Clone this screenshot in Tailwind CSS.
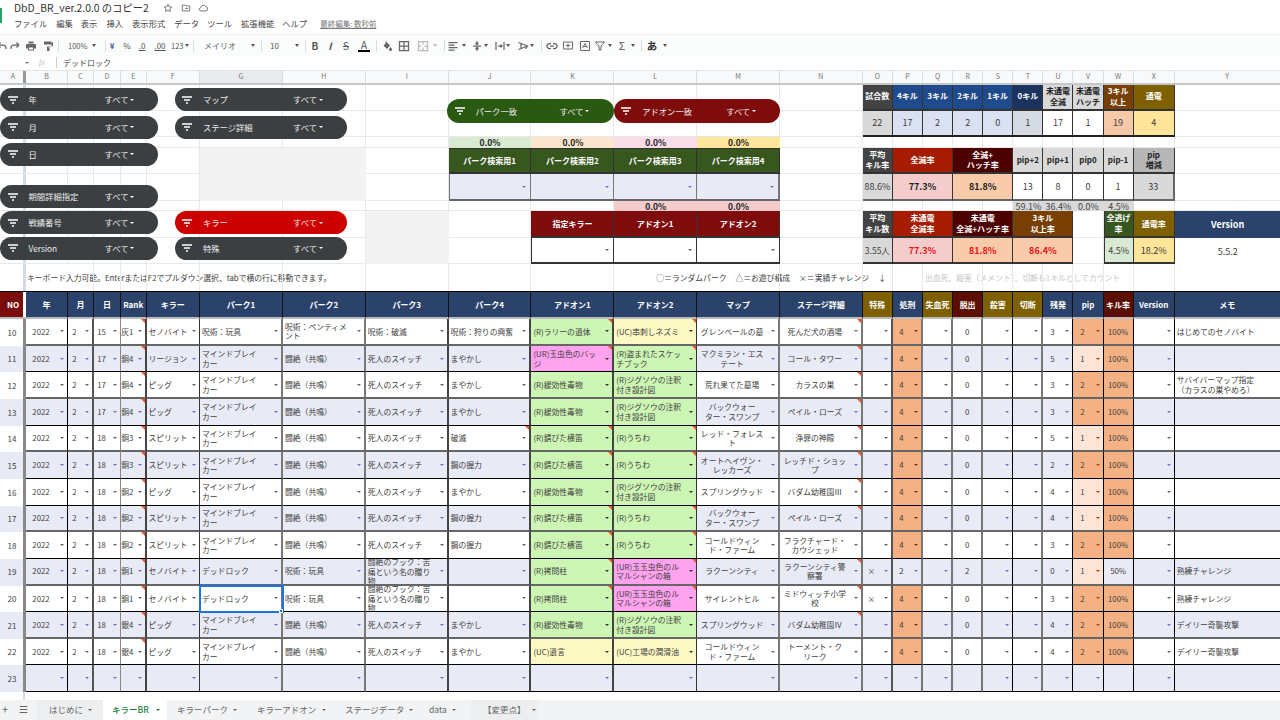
<!DOCTYPE html>
<html lang="ja">
<head>
  <meta charset="UTF-8" />
  <title>DbD_BR_ver.2.0.0 のコピー2</title>
  <script src="https://cdn.jsdelivr.net/npm/@tailwindcss/browser@4"></script>
</head>
<body class="w-[1280px] h-[720px] overflow-hidden bg-white text-[7.8px] text-[#404040] font-['Noto_Sans_CJK_JP',sans-serif]">

  <!-- title + menu -->
  <div class="relative h-[34px] pl-[14px]">
    <div class="absolute left-0 top-[8px] w-[2px] h-[15px] bg-[#23a566]"></div>
    <div class="flex items-center h-[16px]">
      <span class="w-[149px] text-[10.3px] leading-[16px] text-[#333] whitespace-nowrap">DbD_BR_ver.2.0.0 のコピー2</span>
      <svg class="w-[10px] h-[10px]" viewBox="0 0 24 24" fill="none" stroke="#5f6368" stroke-width="2"><path d="M12 3l2.8 6 6.4.7-4.800 4.400 1.400 6.400L12 17.200 6.200 20.500l1.400-6.400L2.800 9.700 9.200 9z"/></svg>
      <svg class="ml-[8px] w-[10px] h-[10px]" viewBox="0 0 24 24" fill="none" stroke="#5f6368" stroke-width="2"><path d="M3 5h7l2 2h9v12H3z"/><path d="M10 13h6m-2-2l2 2-2 2"/></svg>
      <svg class="ml-[7px] w-[11px] h-[10px]" viewBox="0 0 24 24" fill="none" stroke="#5f6368" stroke-width="2"><path d="M6 19a4 4 0 0 1-.5-8A6.500 6.500 0 0 1 18 9.500a4.800 4.800 0 0 1 0 9.500z"/></svg>
    </div>
    <div class="flex items-center h-[15px] text-[8.3px] text-[#444] whitespace-nowrap">
      <span>ファイル</span>
      <span class="ml-[9px]">編集</span>
      <span class="ml-[8px]">表示</span>
      <span class="ml-[9px]">挿入</span>
      <span class="ml-[9px]">表示形式</span>
      <span class="ml-[9px]">データ</span>
      <span class="ml-[8px]">ツール</span>
      <span class="ml-[9px]">拡張機能</span>
      <span class="ml-[8px]">ヘルプ</span>
      <span class="ml-[13px] text-[7.5px] text-[#777] underline">最終編集: 数秒前</span>
    </div>
  </div>

  <!-- toolbar -->
  <div class="flex items-center h-[22px] bg-[#fbfcfc] text-[8px] text-[#555] border-t border-t-[#eeeeee] whitespace-nowrap overflow-hidden">
    <svg class="ml-[-4px] w-[12px] h-[12px] shrink-0" viewBox="0 0 24 24" fill="none" stroke="#666" stroke-width="2.5"><path d="M4 10l5-5M4 10l5 5M4 10h10a6 6 0 0 1 6 6v2"/></svg>
    <svg class="ml-[1px] w-[12px] h-[12px] shrink-0" viewBox="0 0 24 24" fill="none" stroke="#666" stroke-width="2.5"><path d="M20 10l-5-5M20 10l-5 5M20 10H10a6 6 0 0 0-6 6v2"/></svg>
    <svg class="ml-[4px] w-[12px] h-[12px] shrink-0" viewBox="0 0 24 24" fill="#666"><path d="M7 3h10v4H7zM4 8h16a2 2 0 0 1 2 2v7h-4v4H6v-4H2v-7a2 2 0 0 1 2-2zm4 7v4h8v-4z"/></svg>
    <svg class="ml-[5px] w-[12px] h-[12px] shrink-0" viewBox="0 0 24 24" fill="#666"><path d="M4 3h15v6H4zM20 5h2v7h-9v3h2v7h-5v-9h9V7h-1z"/></svg>
    <span class="ml-[4px] w-px h-[12px] bg-[#dadce0] shrink-0"></span>
    <span class="ml-[9px] w-[16px] text-[7.5px] shrink-0">100%</span>
    <span class="ml-[8px] w-0 h-0 border-x-[2.5px] border-t-[3px] border-x-transparent border-t-[#555] shrink-0"></span>
    <span class="ml-[9px] w-px h-[12px] bg-[#dadce0] shrink-0"></span>
    <span class="w-[12px] text-center font-bold text-[#3c5a99] shrink-0">¥</span>
    <span class="ml-[3px] w-[12px] text-center shrink-0">%</span>
    <span class="ml-[3px] w-[12px] text-center underline shrink-0">.0</span>
    <span class="ml-[5px] w-[14px] text-center underline shrink-0">.00</span>
    <span class="ml-[4px] w-[13px] text-[7.5px] shrink-0">123</span>
    <span class="ml-[1px] w-0 h-0 border-x-[2.5px] border-t-[3px] border-x-transparent border-t-[#555] shrink-0"></span>
    <span class="ml-[4px] w-px h-[12px] bg-[#dadce0] shrink-0"></span>
    <span class="ml-[10px] w-[27px] text-[#666] shrink-0">メイリオ</span>
    <span class="ml-[20px] w-0 h-0 border-x-[2.5px] border-t-[3px] border-x-transparent border-t-[#555] shrink-0"></span>
    <span class="ml-[6px] w-px h-[12px] bg-[#dadce0] shrink-0"></span>
    <span class="ml-[8px] w-[8px] shrink-0">10</span>
    <span class="ml-[17px] w-0 h-0 border-x-[2.5px] border-t-[3px] border-x-transparent border-t-[#555] shrink-0"></span>
    <span class="ml-[6px] w-px h-[12px] bg-[#dadce0] shrink-0"></span>
    <span class="ml-[3px] w-[12px] text-center text-[10px] font-bold shrink-0">B</span>
    <span class="ml-[3px] w-[12px] text-center text-[10px] font-bold italic shrink-0">I</span>
    <span class="ml-[4px] w-[12px] text-center text-[10px] line-through shrink-0">S</span>
    <span class="ml-[6px] w-[12px] text-center text-[10px] leading-[11px] border-b-2 border-b-black shrink-0">A</span>
    <span class="ml-[6px] w-px h-[12px] bg-[#dadce0] shrink-0"></span>
    <svg class="ml-[4px] w-[12px] h-[12px] shrink-0" viewBox="0 0 24 24" fill="#666"><path d="M10 3l8 8-6 7-7-7 5-5-2-2zM19 14s3 3.500 3 5a3 3 0 0 1-6 0c0-1.500 3-5 3-5z"/></svg>
    <svg class="ml-[5px] w-[12px] h-[12px] shrink-0" viewBox="0 0 24 24" fill="none" stroke="#666" stroke-width="2.5"><path d="M3 3h18v18H3zM12 3v18M3 12h18"/></svg>
    <svg class="ml-[7px] w-[12px] h-[12px] shrink-0" viewBox="0 0 24 24" fill="none" stroke="#bbb" stroke-width="2.5"><path d="M3 3h18v18H3zM12 3v6m0 6v6M3 12h6m6 0h6"/></svg>
    <span class="ml-[4px] w-0 h-0 border-x-[2.5px] border-t-[3px] border-x-transparent border-t-[#bbb] shrink-0"></span>
    <span class="ml-[7px] w-px h-[12px] bg-[#dadce0] shrink-0"></span>
    <svg class="ml-[2px] w-[12px] h-[12px] shrink-0" viewBox="0 0 24 24" fill="none" stroke="#666" stroke-width="2.5"><path d="M3 5h18M3 10h12M3 15h18M3 20h12"/></svg>
    <span class="ml-[3px] w-0 h-0 border-x-[2.5px] border-t-[3px] border-x-transparent border-t-[#555] shrink-0"></span>
    <svg class="ml-[5px] w-[12px] h-[12px] shrink-0" viewBox="0 0 24 24" fill="none" stroke="#666" stroke-width="2.5"><path d="M12 2v7m-3-3l3 3 3-3M12 22v-7m-3 3l3-3 3 3M4 12h16"/></svg>
    <span class="ml-[1px] w-0 h-0 border-x-[2.5px] border-t-[3px] border-x-transparent border-t-[#555] shrink-0"></span>
    <svg class="ml-[6px] w-[12px] h-[12px] shrink-0" viewBox="0 0 24 24" fill="none" stroke="#666" stroke-width="2.5"><path d="M4 4v16M20 4v16M8 12h8m-3-3l3 3-3 3"/></svg>
    <span class="w-0 h-0 border-x-[2.5px] border-t-[3px] border-x-transparent border-t-[#555] shrink-0"></span>
    <svg class="ml-[7px] w-[12px] h-[12px] shrink-0" viewBox="0 0 24 24" fill="none" stroke="#666" stroke-width="2.5"><path d="M3 5l18 7-18 7M8 7v10M21 12l-4 6"/></svg>
    <span class="ml-[1px] w-0 h-0 border-x-[2.5px] border-t-[3px] border-x-transparent border-t-[#555] shrink-0"></span>
    <span class="ml-[7px] w-px h-[12px] bg-[#dadce0] shrink-0"></span>
    <svg class="ml-[4px] w-[12px] h-[12px] shrink-0" viewBox="0 0 24 24" fill="none" stroke="#666" stroke-width="2.5"><path d="M10 7H7a5 5 0 0 0 0 10h3M14 7h3a5 5 0 0 1 0 10h-3M8 12h8"/></svg>
    <svg class="ml-[4px] w-[12px] h-[12px] shrink-0" viewBox="0 0 24 24" fill="none" stroke="#666" stroke-width="2"><path d="M3 4h18v14H3zM12 7v8M8 11h8"/></svg>
    <svg class="ml-[5px] w-[12px] h-[12px] shrink-0" viewBox="0 0 24 24" fill="none" stroke="#666" stroke-width="2"><path d="M3 3h18v18H3zM7 16l5-9 5 9M9 13h6"/></svg>
    <svg class="ml-[3px] w-[12px] h-[12px] shrink-0" viewBox="0 0 24 24" fill="none" stroke="#666" stroke-width="2"><path d="M3 4h18l-7 8v8h-4v-8z"/></svg>
    <span class="ml-[2px] w-0 h-0 border-x-[2.5px] border-t-[3px] border-x-transparent border-t-[#555] shrink-0"></span>
    <span class="ml-[4px] w-[12px] text-center text-[11px] shrink-0">Σ</span>
    <span class="ml-[3px] w-0 h-0 border-x-[2.5px] border-t-[3px] border-x-transparent border-t-[#555] shrink-0"></span>
    <span class="ml-[6px] w-px h-[12px] bg-[#dadce0] shrink-0"></span>
    <span class="ml-[4px] w-[12px] text-center text-[10.5px] font-bold text-[#333] shrink-0">あ</span>
    <span class="ml-[5px] w-0 h-0 border-x-[2.5px] border-t-[3px] border-x-transparent border-t-[#555] shrink-0"></span>
  </div>

  <!-- formula bar -->
  <div class="flex items-center h-[14.5px] text-[8px] border-b border-b-[#e4e4e4]">
    <span class="ml-[25px] w-0 h-0 border-x-[2px] border-t-[2.5px] border-x-transparent border-t-[#777]"></span>
    <span class="ml-[10px] w-[10px] text-[#bbb] italic font-['Liberation_Serif',serif]">fx</span>
    <span class="ml-[7px] w-px h-[11px] bg-[#cccccc]"></span>
    <span class="ml-[6px] text-[#444]">デッドロック</span>
  </div>

  <!-- sheet -->
  <div id="sheet" class="relative w-[1280px] overflow-hidden"></div>

  <!-- bottom strip under the grid -->
  <div class="h-[7.7px] w-[24.5px] border-r-2 border-r-[#d5dbe3]"></div>

  <!-- sheet tabs -->
  <div class="flex items-center h-[20px] bg-[#f1f3f4] text-[8.5px] text-[#666] whitespace-nowrap">
    <span class="ml-[2px] w-[6px] text-[11px] leading-none text-center">+</span>
    <svg class="ml-[11px] w-[9px] h-[9px] shrink-0" viewBox="0 0 12 12" fill="none" stroke="#666" stroke-width="1.5"><path d="M1 2h10M1 6h10M1 10h10"/></svg>
    <span class="flex items-center ml-[9px] pl-[12px] w-[66px] h-full bg-[#eceef0] shrink-0">はじめに<span class="ml-[5px] w-0 h-0 border-x-[2px] border-t-[2.5px] border-x-transparent border-t-[#666]"></span></span>
    <span class="flex items-center pl-[9px] w-[64px] h-full bg-white font-medium text-[#188038] shrink-0">キラーBR<span class="ml-[7px] w-0 h-0 border-x-[2px] border-t-[2.5px] border-x-transparent border-t-[#188038]"></span></span>
    <span class="flex items-center pl-[10px] w-[80px] h-full shrink-0">キラーパーク<span class="ml-[5px] w-0 h-0 border-x-[2px] border-t-[2.5px] border-x-transparent border-t-[#666]"></span></span>
    <span class="flex items-center pl-[10px] w-[88px] h-full shrink-0">キラーアドオン<span class="ml-[6px] w-0 h-0 border-x-[2px] border-t-[2.5px] border-x-transparent border-t-[#666]"></span></span>
    <span class="flex items-center pl-[10px] w-[89px] h-full shrink-0">ステージデータ<span class="ml-[5px] w-0 h-0 border-x-[2px] border-t-[2.5px] border-x-transparent border-t-[#666]"></span></span>
    <span class="flex items-center pl-[5px] w-[47px] h-full shrink-0">data<span class="ml-[5px] w-0 h-0 border-x-[2px] border-t-[2.5px] border-x-transparent border-t-[#666]"></span></span>
    <span class="flex items-center pl-[12px] w-[67px] h-full bg-[#eceef0] shrink-0">【変更点】<span class="ml-[6px] w-0 h-0 border-x-[2px] border-t-[2.5px] border-x-transparent border-t-[#666]"></span></span>
  </div>

<script>
const GRID = 'grid grid-cols-[26px_42px_26px_27px_25.5px_53.5px_83px_repeat(7,82.84px)_repeat(9,30.1px)_41px_106px]';
const LETTERS = 'A B C D E F G H I J K L M N O P Q R S T U V W X Y'.split(' ');

const sheet = document.getElementById('sheet');
let html = '';

// Column letters
html += `<div class="${GRID} h-[14px] bg-[#f8f9fa] text-[#777] text-[7px] border-b-2 border-b-[#c4c7c9]">`;
LETTERS.forEach(l => {
  const sel = l === 'G' ? 'bg-[#e8eaed]' : '';
  const frozen = l === 'A' ? 'shadow-[inset_-3px_0_0_#999]' : 'border-r border-r-[#dadce0]';
  html += `<div class="flex items-center justify-center ${sel} ${frozen}">${l}</div>`;
});
html += '</div>';

// Upper block
const hd = 'justify-center text-center text-[8px] font-bold text-white leading-[10.5px] border-r border-r-[#333] border-b-2 border-b-[#333]';
const hdGrey = 'justify-center text-center text-[8px] font-bold text-[#222] leading-[10.5px] border-r border-r-[#333] border-b-2 border-b-[#333]';
const val = 'justify-center text-[9px] border-r border-r-[#333] border-b-2 border-b-[#222]';
const bar = 'justify-center text-[8.5px] font-bold text-[#222] leading-none';
const bar2 = 'justify-center text-[9px] text-[#444] leading-none bg-[#d9d9d9]';
const perkH = 'justify-center text-[8px] font-bold text-white border-r border-r-[#333] border-b-2 border-b-[#333] bg-[#38571f] border-t border-t-[#333]';
const addH = 'justify-center text-[8px] font-bold text-white border-r border-r-[#333] border-b-2 border-b-[#333] bg-[#7f0c0c]';
const greyFill = 'bg-[#f3f3f3]';

const upper = [
  ['h-[26.4px]', {
    O: ['試合数', hd + ' bg-[#434343]'], P: ['4キル', hd + ' bg-[#1f4a8c]'], Q: ['3キル', hd + ' bg-[#1f4a8c]'],
    R: ['2キル', hd + ' bg-[#1f4a8c]'], S: ['1キル', hd + ' bg-[#1f4a8c]'], T: ['0キル', hd + ' bg-[#1c335f]'],
    U: ['未通電<br>全滅', hdGrey + ' bg-[#d9d9d9]'], V: ['未通電<br>ハッチ', hdGrey + ' bg-[#d9d9d9]'],
    W: ['3キル<br>以上', hd + ' bg-[#783f04]'], X: ['通電', hd + ' bg-[#7f6000]'],
  }],
  ['h-[26.6px]', {
    O: ['22', val + ' bg-[#d9d9d9]'], P: ['17', val + ' bg-[#d9e1f2]'], Q: ['2', val + ' bg-[#d9e1f2]'],
    R: ['2', val + ' bg-[#d9e1f2]'], S: ['0', val + ' bg-[#d9e1f2]'], T: ['1', val + ' bg-[#d5dae3]'],
    U: ['17', val], V: ['1', val], W: ['19', val + ' bg-[#f6c9a9]'], X: ['4', val + ' bg-[#ffe599]'],
  }],
  ['h-[10.5px]', {
    J: ['0.0%', bar + ' bg-[#d9ead3]'], K: ['0.0%', bar + ' bg-[#fce5cd]'], L: ['0.0%', bar + ' bg-[#fadbe8]'], M: ['0.0%', bar + ' bg-[#ffe599]'],
  }],
  ['h-[26.5px]', {
    G: ['', greyFill], H: ['', greyFill],
    J: ['パーク検索用1', perkH], K: ['パーク検索用2', perkH], L: ['パーク検索用3', perkH], M: ['パーク検索用4', perkH],
    O: ['平均<br>キル率', hd + ' bg-[#434343]'], P: ['全滅率', hd + ' bg-[#a61c00] col-span-2'], R: ['全滅+<br>ハッチ率', hd + ' bg-[#4c0000] col-span-2'],
    T: ['pip+2', hdGrey + ' bg-[#d9d9d9]'], U: ['pip+1', hdGrey + ' bg-[#d9d9d9]'], V: ['pip0', hdGrey + ' bg-[#d9d9d9]'], W: ['pip-1', hdGrey + ' bg-[#d9d9d9]'],
    X: ['pip<br>増減', hdGrey + ' bg-[#b7b7b7]'],
  }],
  ['h-[26.7px]', {
    G: ['', greyFill], H: ['', greyFill],
    J: ['', 'bg-[#e8eaf6] border-x border-x-[#777] border-b-2 border-b-[#666]', 'blue'], K: ['', 'bg-[#e8eaf6] border-r border-r-[#777] border-b-2 border-b-[#666]', 'blue'],
    L: ['', 'bg-[#e8eaf6] border-r border-r-[#777] border-b-2 border-b-[#666]', 'blue'], M: ['', 'bg-[#e8eaf6] border-r-2 border-r-[#777] border-b-2 border-b-[#666]', 'blue'],
    O: ['88.6%', 'justify-center text-[9px] whitespace-nowrap border-r border-r-[#333] border-b-2 border-b-[#666] bg-[#d9d9d9]'],
    P: ['77.3%', 'justify-center font-bold text-[#222] text-[9px] border-r border-r-[#333] border-b-2 border-b-[#666] bg-[#f4cccc] col-span-2'],
    R: ['81.8%', 'justify-center font-bold text-[#222] text-[9px] border-r border-r-[#333] border-b-2 border-b-[#666] bg-[#f9cbab] col-span-2'],
    T: ['13', 'justify-center text-[9px] border-r border-r-[#333] border-b-2 border-b-[#666]'], U: ['8', 'justify-center text-[9px] border-r border-r-[#333] border-b-2 border-b-[#666]'],
    V: ['0', 'justify-center text-[9px] border-r border-r-[#333] border-b-2 border-b-[#666]'], W: ['1', 'justify-center text-[9px] border-r border-r-[#333] border-b-2 border-b-[#666]'],
    X: ['33', 'justify-center text-[9px] border-r-2 border-r-[#666] border-b-2 border-b-[#666] bg-[#d9d9d9]'],
  }],
  ['h-[10px]', {
    L: ['0.0%', bar + ' bg-[#f4cccc]'], M: ['0.0%', bar + ' bg-[#f4cccc]'],
    T: ['59.1%', bar2], U: ['36.4%', bar2], V: ['0.0%', bar2], W: ['4.5%', bar2],
  }],
  ['h-[27.3px]', {
    I: ['', greyFill],
    K: ['指定キラー', addH], L: ['アドオン1', addH], M: ['アドオン2', addH],
    O: ['平均<br>キル数', hd + ' bg-[#434343]'], P: ['未通電<br>全滅率', hd + ' bg-[#a61c00] col-span-2'], R: ['未通電<br>全滅+ハッチ率', hd + ' bg-[#4c0000] col-span-2'],
    T: ['3キル<br>以上率', hd + ' bg-[#783f04] col-span-2'],
    W: ['全逃げ<br>率', hd + ' bg-[#38571f] border-l border-l-[#333]'], X: ['通電率', hd + ' bg-[#7f6000]'], Y: ['Version', 'justify-center font-bold text-white text-[9px] bg-[#2b436b]'],
  }],
  ['h-[26px]', {
    I: ['', greyFill],
    K: ['', 'bg-white border-l border-l-[#333] border-r border-r-[#333] border-b-2 border-b-[#333]', 'grey'],
    L: ['', 'bg-white border-r border-r-[#333] border-b-2 border-b-[#333]', 'grey'],
    M: ['', 'bg-white border-r border-r-[#333] border-b-2 border-b-[#333]', 'grey'],
    O: ['3.55人', 'justify-center text-[8.5px] whitespace-nowrap border-r border-r-[#333] border-b-2 border-b-[#333] bg-[#d9d9d9]'],
    P: ['77.3%', 'justify-center font-bold text-[#ee1111] text-[9px] border-r border-r-[#333] border-b-2 border-b-[#333] bg-[#f4cccc] col-span-2'],
    R: ['81.8%', 'justify-center font-bold text-[#ee1111] text-[9px] border-r border-r-[#333] border-b-2 border-b-[#333] bg-[#f9cbab] col-span-2'],
    T: ['86.4%', 'justify-center font-bold text-[#ee1111] text-[9px] border-r border-r-[#333] border-b-2 border-b-[#333] bg-[#f9cbab] col-span-2'],
    W: ['4.5%', 'justify-center text-[9px] border-x border-x-[#333] border-b-2 border-b-[#333] bg-[#d9ead3]'],
    X: ['18.2%', 'justify-center text-[9px] border-r border-r-[#333] border-b-2 border-b-[#333] bg-[#ffe599]'],
    Y: ['5.5.2', 'justify-center text-[9px]'],
  }],
  ['h-[27px]', {
    B: ['キーボード入力可能。EnterまたはF2でプルダウン選択、tabで横の行に移動できます。', 'whitespace-nowrap pl-px'],
    L: ['○＝ランダムパーク<span class="ml-[9px]">△＝お遊び構成</span><span class="ml-[9px]">×＝実績チャレンジ</span><span class="ml-[9px]">↓</span>', 'whitespace-nowrap pl-[42px]'],
    Q: ['出血死、殺害（メメント）、切断も1キルとしてカウント', 'whitespace-nowrap pl-[2px] text-[#c4c4c4]'],
  }],
];

upper.forEach(([h, cells], rowIndex) => {
  html += `<div class="${GRID} ${h}">`;
  let skip = 0;
  LETTERS.forEach(l => {
    if (skip > 0) { skip--; return; }
    const c = cells[l];
    if (!c) {
      const line = l === 'A' ? 'shadow-[inset_-3px_0_0_#d5dbe3]' : 'border-r border-r-[#e8e8e8]';
      const under = rowIndex === 8 ? '' : 'border-b border-b-[#e8e8e8]';
      html += `<div class="${line} ${under}"></div>`;
      return;
    }
    if (c[1].includes('col-span-2')) skip = 1;
    let arrow = '';
    if (c[2] === 'blue') arrow = '<span class="ml-auto mr-[4px] w-0 h-0 border-x-[2px] border-t-[2.5px] border-x-transparent border-t-[#6b70d6]"></span>';
    if (c[2] === 'grey') arrow = '<span class="ml-auto mr-[4px] w-0 h-0 border-x-[2px] border-t-[2.5px] border-x-transparent border-t-[#666]"></span>';
    html += `<div class="flex items-center ${c[1]}">${c[0]}${arrow}</div>`;
  });
  html += '</div>';
});

// Table header
const NAVY = 'bg-[#2b436b]', OCHRE = 'bg-[#7f6000]', MAROON = 'bg-[#5b0f00]';
const heads = [
  ['NO', 'bg-[#7a0c0c]'], ['年', NAVY], ['月', NAVY], ['日', NAVY], ['Rank', NAVY], ['キラー', NAVY], ['パーク1', NAVY], ['パーク2', NAVY], ['パーク3', NAVY], ['パーク4', NAVY],
  ['アドオン1', NAVY], ['アドオン2', NAVY], ['マップ', NAVY], ['ステージ詳細', NAVY], ['特殊', OCHRE], ['処刑', NAVY], ['失血死', OCHRE], ['脱出', MAROON], ['殺害', OCHRE], ['切断', OCHRE],
  ['残発', NAVY], ['pip', NAVY], ['キル率', MAROON], ['Version', NAVY], ['メモ', NAVY],
];
html += `<div class="${GRID} h-[27.7px]">`;
heads.forEach(([t, bg], i) => {
  const edge = i === 0 ? 'shadow-[inset_-3px_0_0_#fff]' : 'border-r border-r-[#111]';
  html += `<div class="flex items-center justify-center text-[8px] font-bold text-white border-t border-t-black border-b-2 border-b-[#bbb] whitespace-nowrap ${bg} ${edge}">${t}</div>`;
});
html += '</div>';

// Table body
const RIGHT = {
  A: 'shadow-[inset_-3px_0_0_#888]', B: 'border-r border-r-black', C: 'border-r-2 border-r-[#555]', D: 'border-r border-r-[#888]',
  E: 'border-r-2 border-r-[#444]', F: 'border-r border-r-[#333]', G: 'border-r-2 border-r-[#777]', H: 'border-r-2 border-r-[#777]',
  I: 'border-r-2 border-r-[#444]', J: 'border-r-2 border-r-[#444]', K: 'border-r-2 border-r-[#444]', L: 'border-r border-r-[#333]',
  M: 'border-r-2 border-r-[#777]', N: 'border-r-2 border-r-[#777]', O: 'border-r-2 border-r-[#555]', P: 'border-r-2 border-r-[#777]',
  Q: 'border-r-2 border-r-[#777]', R: 'border-r-2 border-r-[#777]', S: 'border-r border-r-black', T: 'border-r-2 border-r-[#777]',
  U: 'border-r border-r-black', V: 'border-r border-r-black', W: 'border-r border-r-black', X: 'border-r border-r-black', Y: '',
};
const ALIGN = {
  B: 'text-center', C: 'text-center', D: 'text-center', E: 'text-center', F: 'text-left pl-[2px]', G: 'text-left pl-[2px]', H: 'text-left pl-[2px]', I: 'text-left pl-[2px]',
  J: 'text-left pl-[2px]', K: 'text-left pl-[2px]', L: 'text-left pl-[2px]', M: 'text-center px-[1px]', N: 'text-center px-[1px]',
  O: 'text-center', P: 'text-center', Q: 'text-center', S: 'text-center', T: 'text-center', U: 'text-center', V: 'text-center', X: 'text-center',
};
const MB = 'マインドブレイカー', ZT = '闘絶（共鳴）', SS = '死人のスイッチ', MY = 'まやかし', HA = '鋼の握力';
const SLOW = '(R)緩効性毒物', JIG = '(R)ジグソウの注釈付き設計図', FUE = '(R)錆びた横笛', FAN = '(R)うちわ';
const HOOK = '闘絶のフック：苦痛という名の贈り物', BOX = '(UR)玉玉虫色のルマルシャンの箱';

// no, day, rank, killer, perk1-4, addon1-2, map, stage, special, sacrifice, escaped, gens, pip, kill%, memo
const rows = [
  [10, 15, '灰1', 'セノバイト', '呪術：玩具', '呪術：ペンティメント', '呪術：破滅', '呪術：狩りの興奮', '(R)ラリーの遺体', '(UC)串刺しネズミ', 'グレンベールの墓', '死んだ犬の酒場', '', '4', '0', '3', '2', '100%', 'はじめてのセノバイト'],
  [11, 17, '銅4', 'リージョン', MB, ZT, SS, MY, '(UR)玉虫色のバッジ', '(R)盗まれたスケッチブック', 'マクミラン・エステート', 'コール・タワー', '', '4', '0', '5', '1', '100%', ''],
  [12, 17, '銅4', 'ピッグ', MB, ZT, SS, MY, SLOW, JIG, '荒れ果てた墓場', 'カラスの巣', '', '4', '0', '3', '2', '100%', 'サバイバーマップ指定<br>（カラスの巣やめろ）'],
  [13, 17, '銅4', 'ピッグ', MB, ZT, SS, MY, SLOW, JIG, 'バックウォーター・スワンプ', 'ペイル・ローズ', '', '4', '0', '3', '2', '100%', ''],
  [14, 18, '銅3', 'スピリット', MB, ZT, SS, '破滅', FUE, FAN, 'レッド・フォレスト', '浄罪の神殿', '', '4', '0', '5', '1', '100%', ''],
  [15, 18, '銅3', 'スピリット', MB, ZT, SS, HA, FUE, FAN, 'オートヘイヴン・レッカーズ', 'レッチド・ショップ', '', '4', '0', '2', '2', '100%', ''],
  [16, 18, '銅2', 'ピッグ', MB, ZT, SS, MY, SLOW, JIG, 'スプリングウッド', 'バダム幼稚園Ⅲ', '', '4', '0', '4', '1', '100%', ''],
  [17, 18, '銅2', 'スピリット', MB, ZT, SS, HA, FUE, FAN, 'バックウォーター・スワンプ', 'ペイル・ローズ', '', '4', '0', '4', '1', '100%', ''],
  [18, 18, '銅2', 'スピリット', MB, ZT, SS, HA, FUE, FAN, 'コールドウィンド・ファーム', 'フラクチャード・カウシェッド', '', '4', '0', '3', '2', '100%', ''],
  [19, 18, '銅1', 'セノバイト', 'デッドロック', '呪術：玩具', HOOK, '', '(R)拷問柱', BOX, 'ラクーンシティ', 'ラクーンシティ警察署', '×', '2', '2', '0', '1', '50%', '熟練チャレンジ'],
  [20, 18, '銅1', 'セノバイト', 'デッドロック', '呪術：玩具', HOOK, '', '(R)拷問柱', BOX, 'サイレントヒル', 'ミドウィッチ小学校', '×', '4', '0', '3', '2', '100%', '熟練チャレンジ'],
  [21, 18, '銀4', 'ピッグ', MB, ZT, SS, MY, SLOW, JIG, 'スプリングウッド', 'バダム幼稚園Ⅳ', '', '4', '0', '4', '2', '100%', 'デイリー奇襲攻撃'],
  [22, 18, '銀4', 'ピッグ', MB, ZT, SS, MY, '(UC)遺言', '(UC)工場の潤滑油', 'コールドウィンド・ファーム', 'トーメント・クリーク', '', '4', '0', '4', '2', '100%', 'デイリー奇襲攻撃'],
];

const NOTES = {
  E: [10, 11, 12, 13, 14, 15, 16, 17, 18, 19, 20, 21, 22],
  J: [14],
  K: [10, 11, 14, 15, 17, 18, 19, 20],
  L: [10, 11, 14, 15, 17, 18, 19, 20],
  N: [10, 11, 12, 13, 14, 15, 16, 17, 19, 20, 21],
};
const THICK = [10, 12, 14, 17, 19, 21];

function addonBg(t) {
  if (t.startsWith('(R)')) return 'bg-[#cdf5b4]';
  if (t.startsWith('(UC)')) return 'bg-[#fdf9c4]';
  if (t.startsWith('(UR)')) return 'bg-[#ffa3ef]';
  return '';
}

function bodyRow(no, values) {
  const lav = no % 2 === 1;
  const base = lav ? 'bg-[#e8eaf6]' : 'bg-white';
  const under = THICK.includes(no) ? 'border-b-2 border-b-[#666]' : 'border-b border-b-black';
  let out = `<div class="${GRID} h-[26.65px] [line-break:strict]">`;
  LETTERS.forEach(l => {
    const t = values[l] || '';
    let bg = base;
    let arrowCol = lav ? 'border-t-[#6b70d6]' : 'border-t-[#666]';
    if (l === 'K' || l === 'L') {
      if (t) { bg = addonBg(t); arrowCol = 'border-t-[#333]'; }
    }
    if ((l === 'P' && t === '4') || (l === 'V' && t === '2') || (l === 'W' && t === '100%')) { bg = 'bg-[#f4b183]'; arrowCol = 'border-t-[#7a3300]'; }
    if (l === 'V' && t === '1') { bg = 'bg-[#fce4d6]'; arrowCol = 'border-t-[#c43c00]'; }
    if (l === 'V' && t === '2') arrowCol = 'border-t-[#c43c00]';
    const selected = l === 'G' && no === 20;
    const hasArrow = ALIGN[l] !== undefined;
    const note = NOTES[l] && NOTES[l].includes(no);
    const edge = l === 'A' ? '' : under;
    const sel = selected ? 'outline-2 -outline-offset-1 outline-[#1a73e8] z-10' : 'overflow-hidden';

    out += `<div class="relative flex items-center leading-[9.5px] ${bg} ${RIGHT[l]} ${edge} ${sel}">`;
    if (l === 'A') {
      out += `<span class="w-[24px] text-center text-[8px]">${t}</span>`;
    } else if (hasArrow) {
      out += `<span class="flex-1 min-w-0 ${ALIGN[l]}">${t}</span>`;
      out += `<span class="shrink-0 ml-[4px] mr-[3px] w-0 h-0 border-x-[2px] border-t-[2.5px] border-x-transparent ${arrowCol}"></span>`;
    } else if (l === 'Y') {
      out += `<span class="pl-[2px]">${t}</span>`;
    } else {
      out += `<span class="w-full text-center">${t}</span>`;
    }
    if (note) out += '<span class="absolute top-0 right-0 w-0 h-0 border-t-[4px] border-l-[4px] border-l-transparent border-t-[#f4511e]"></span>';
    if (selected) out += '<span class="absolute -bottom-[2px] -right-[2px] w-[4px] h-[4px] bg-[#1a73e8] border border-white"></span>';
    out += '</div>';
  });
  return out + '</div>';
}

rows.forEach(r => {
  const [no, day, rank, killer, p1, p2, p3, p4, a1, a2, map, stage, sp, ex, esc, gen, pip, kr, memo] = r;
  html += bodyRow(no, {
    A: no, B: '2022', C: '2', D: day, E: rank, F: killer, G: p1, H: p2, I: p3, J: p4, K: a1, L: a2, M: map, N: stage,
    O: sp, P: ex, R: esc, U: gen, V: pip, W: kr, Y: memo,
  });
});
html += bodyRow(23, { A: 23 });

// Filter views floating over the top rows
const LEFT_W = 'left-0 w-[157.7px]', RIGHT_W = 'left-[174.5px] w-[172.5px]';
const DARK = 'bg-[#3b3f42]';
const pills = [
  ['年', LEFT_W + ' top-[17.5px] ' + DARK, 'w-[76px]'],
  ['月', LEFT_W + ' top-[45.2px] ' + DARK, 'w-[76px]'],
  ['日', LEFT_W + ' top-[72.2px] ' + DARK, 'w-[76px]'],
  ['期間詳細指定', LEFT_W + ' top-[114.5px] ' + DARK, 'w-[76px]'],
  ['戦績番号', LEFT_W + ' top-[140.5px] ' + DARK, 'w-[76px]'],
  ['Version', LEFT_W + ' top-[166.2px] ' + DARK, 'w-[76px]'],
  ['マップ', RIGHT_W + ' top-[17.5px] ' + DARK, 'w-[90px]'],
  ['ステージ詳細', RIGHT_W + ' top-[45.2px] ' + DARK, 'w-[90px]'],
  ['キラー', RIGHT_W + ' top-[140.5px] bg-[#cc0000]', 'w-[90px]'],
  ['特殊', RIGHT_W + ' top-[166.2px] ' + DARK, 'w-[90px]'],
  ['パーク一致', 'left-[447px] w-[166.7px] top-[28.8px] bg-[#2a5a12]', 'w-[84px]'],
  ['アドオン一致', 'left-[613.7px] w-[166.3px] top-[28.8px] bg-[#7f0c0c]', 'w-[84px]'],
];
pills.forEach(([label, place, titleW]) => {
  html += `<div class="absolute flex items-center h-[23.3px] rounded-full text-[8.3px] text-[#eeeeee] whitespace-nowrap ${place}">
    <svg class="ml-[7.5px] w-[10px] h-[8px] shrink-0" viewBox="0 0 10 8" fill="none" stroke="#fff" stroke-width="1.3"><path d="M0 1h10M2 4h6M4 7h2"/></svg>
    <span class="ml-[11px] shrink-0 ${titleW}">${label}</span>
    <span class="shrink-0">すべて</span>
    <span class="ml-[2px] w-0 h-0 border-x-[2px] border-t-[2.5px] border-x-transparent border-t-white shrink-0"></span>
  </div>`;
});

sheet.innerHTML = html;
</script>
</body>
</html>
